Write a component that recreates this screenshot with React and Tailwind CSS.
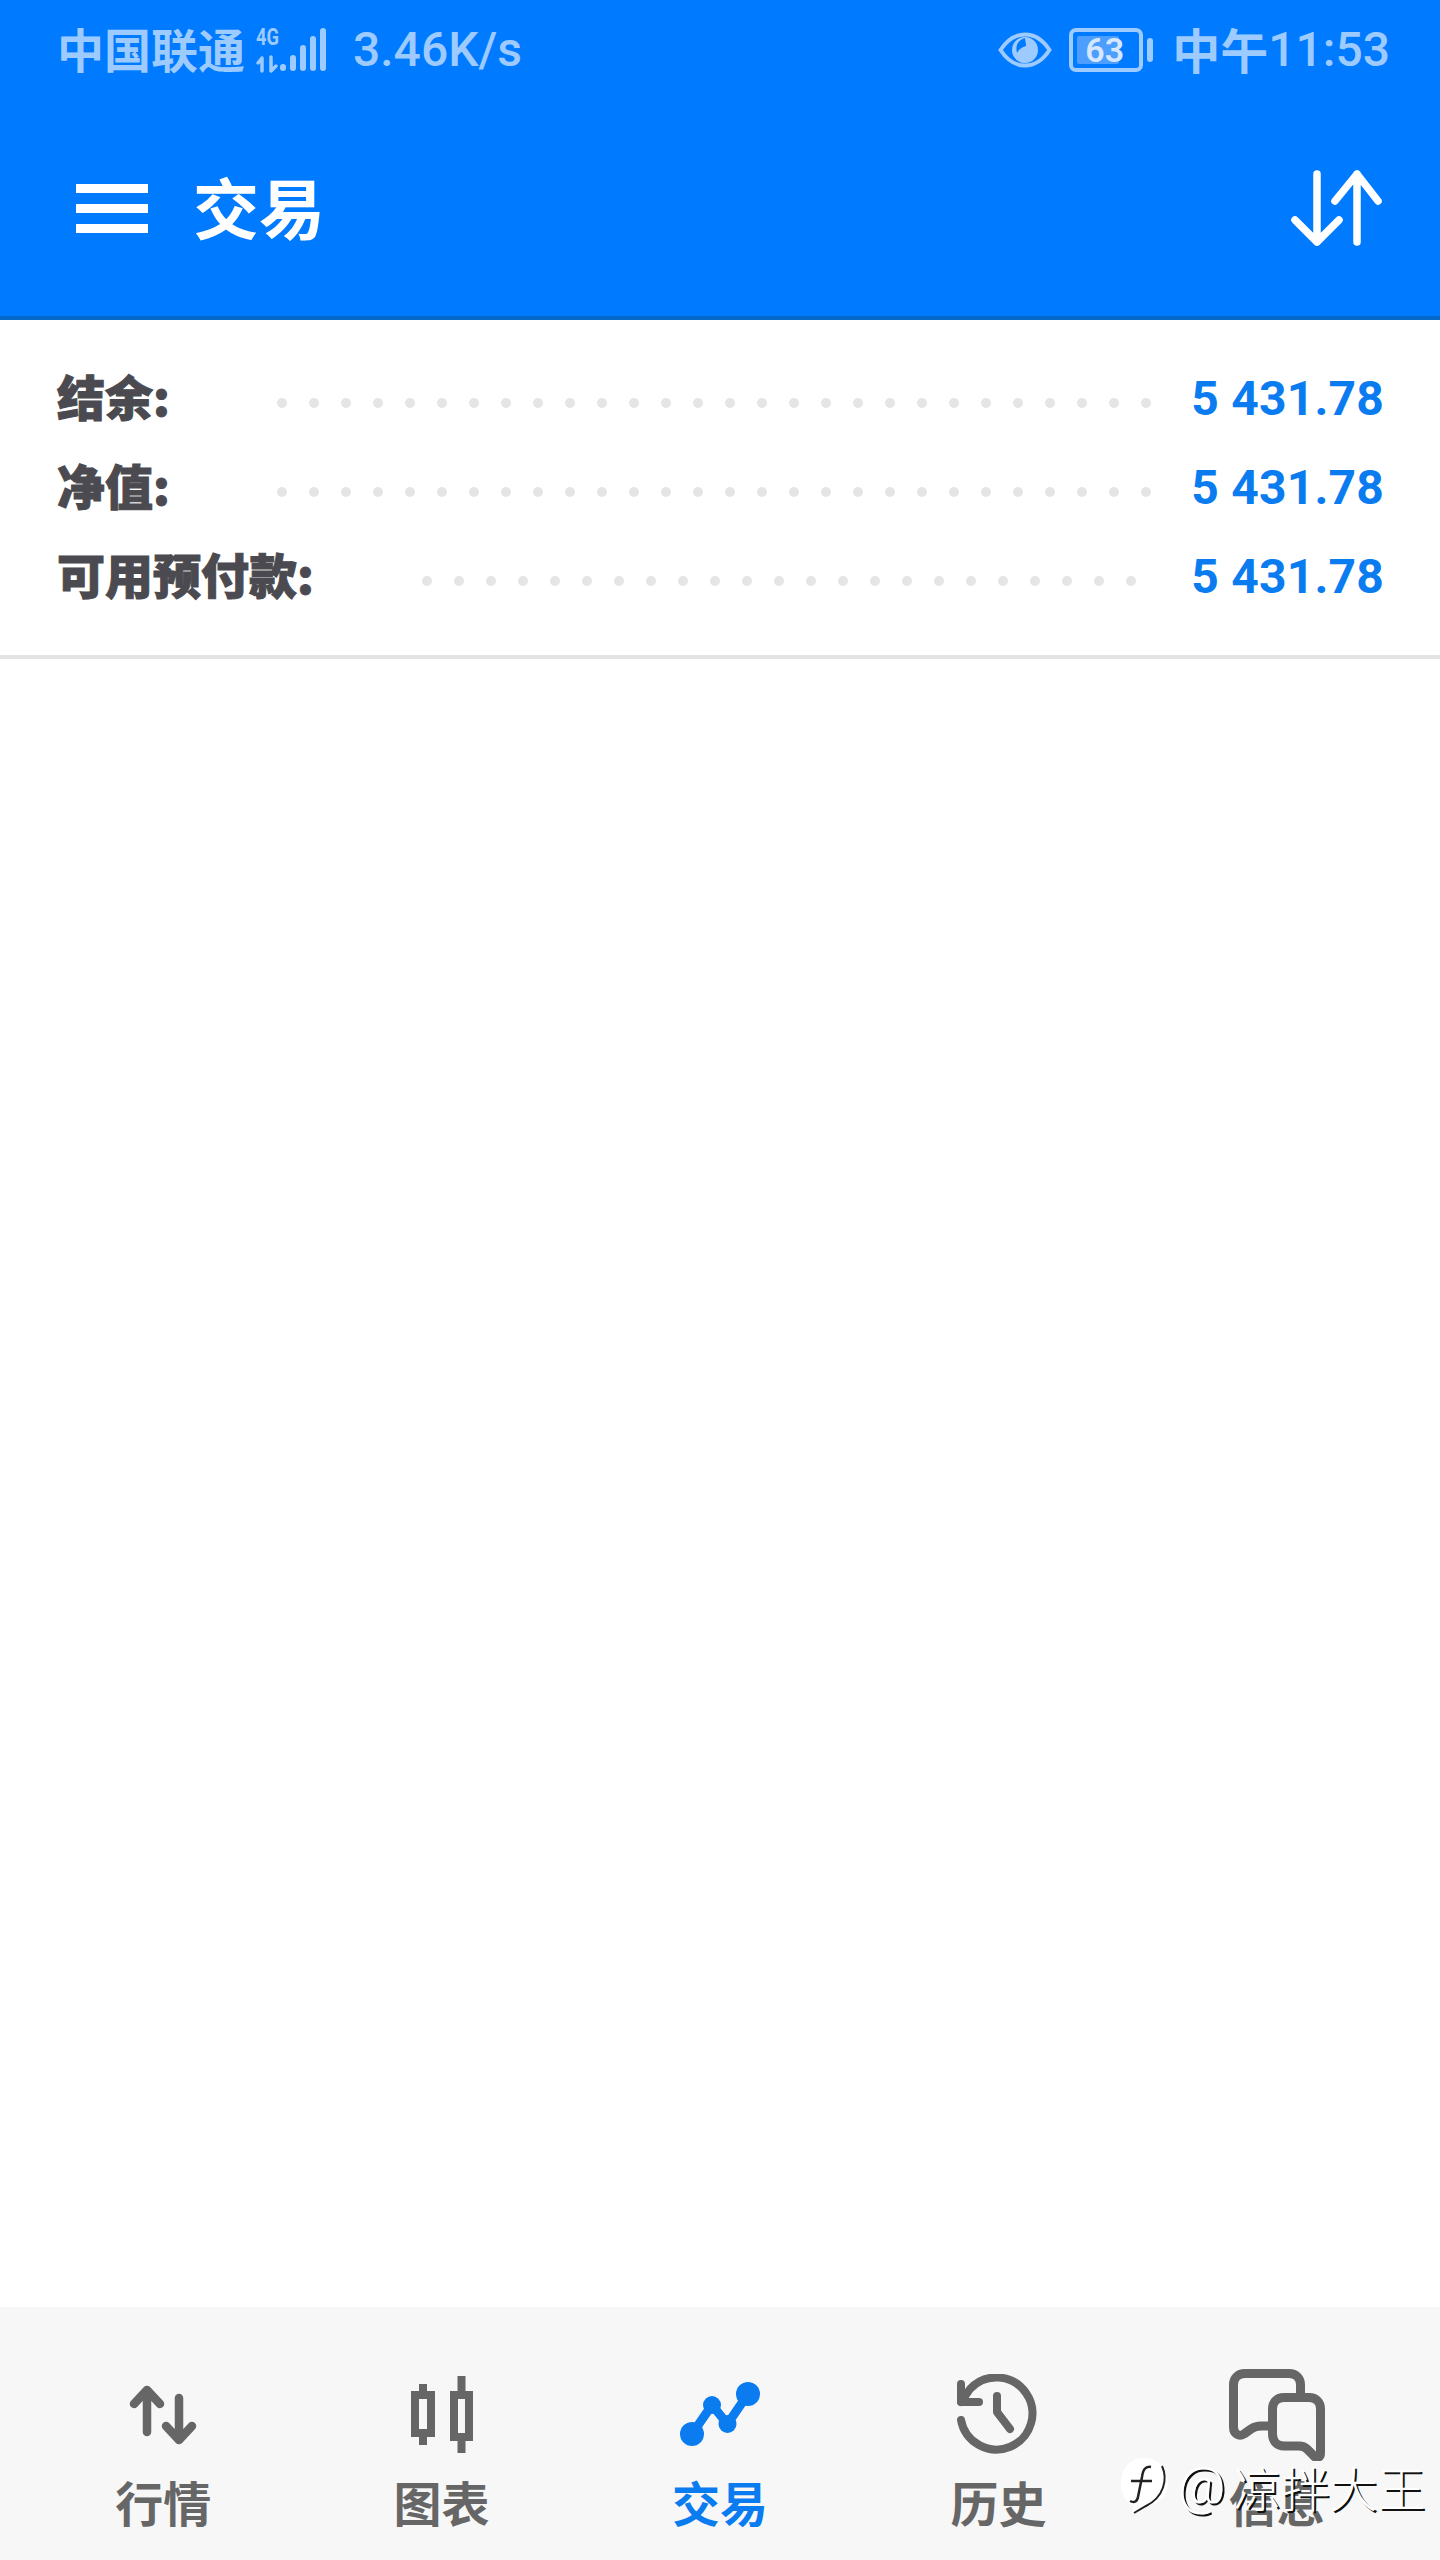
import React from 'react';

const cjk = '"Noto Sans CJK SC", sans-serif';

function SignalIcon() {
  return (
    <svg width="70" height="44" viewBox="0 0 70 44" fill="none" className="overflow-visible text-[#9ecbff]">
      <text x="0" y="17" fontSize="23" fontWeight="700" fill="currentColor" fontFamily="Roboto" textLength="23" lengthAdjust="spacingAndGlyphs">4G</text>
      <path d="M6 43V30M2 35L6 30" stroke="currentColor" strokeWidth="3.5" strokeLinecap="round" strokeLinejoin="round" />
      <path d="M15 29V43L20 38" stroke="currentColor" strokeWidth="3.5" strokeLinecap="round" strokeLinejoin="round" />
      <rect x="24" y="36" width="6" height="7" rx="3" fill="currentColor" />
      <rect x="34" y="27" width="6" height="16" rx="3" fill="currentColor" />
      <rect x="44" y="17" width="6" height="26" rx="3" fill="currentColor" />
      <rect x="54" y="8" width="6" height="35" rx="3" fill="currentColor" />
      <rect x="64" y="0" width="6" height="43" rx="3" fill="currentColor" />
    </svg>
  );
}

function EyeIcon() {
  return (
    <svg width="54" height="36" viewBox="0 0 54 36" fill="none">
      <path d="M2.5 18C9 8 17 2.5 27 2.5S45 8 51.5 18C45 28 37 33.5 27 33.5S9 28 2.5 18Z" stroke="#9ecbff" strokeWidth="4" />
      <circle cx="27" cy="18" r="13" fill="#9ecbff" />
      <path d="M27 6C20 8 17 14 19 21C21 17 24 15 28 14C28 11 27 8 27 6Z" fill="#007aff" />
    </svg>
  );
}

function BatteryIcon() {
  return (
    <div className="flex items-center gap-[4px]">
      <div className="flex h-[44px] w-[74px] items-center rounded-[7px] border-[4px] border-[#9ecbff] p-[4px]">
        <div className="flex h-full w-[42px] items-center rounded-[2px] bg-[#4d9eff] pl-[8px]">
          <span className="whitespace-nowrap text-[34px] font-semibold leading-none text-[#d6e8ff]" style={{ fontFamily: 'Roboto' }}>63</span>
        </div>
      </div>
      <div className="h-[24px] w-[6px] rounded-full bg-[#9ecbff]" />
    </div>
  );
}

function SortIcon() {
  return (
    <svg width="92" height="76" viewBox="0 0 92 76" fill="none" stroke="white" strokeWidth="7.5" strokeLinecap="round" strokeLinejoin="round">
      <path d="M27 4V72M5 50L27 72L49 50" />
      <path d="M67 72V4M45 31L67 4L88 31" />
    </svg>
  );
}

function MarketIcon() {
  return (
    <svg width="68" height="60" viewBox="0 0 68 60" fill="none" stroke="#666666" strokeWidth="8.5" strokeLinecap="round" strokeLinejoin="round">
      <path d="M18 5V47M5 19L18 5L31 19" />
      <path d="M50 13V55M37 41L50 55L63 41" />
    </svg>
  );
}

function ChartIcon() {
  return (
    <svg width="64" height="78" viewBox="0 0 64 78" fill="none">
      <path d="M13 8V69M51.5 0V77" stroke="#666666" strokeWidth="8" />
      <rect x="5" y="19" width="16" height="38" fill="#f7f7f7" stroke="#666666" strokeWidth="8" />
      <rect x="44" y="19" width="15" height="42" fill="#f7f7f7" stroke="#666666" strokeWidth="8" />
    </svg>
  );
}

function TradeIcon() {
  return (
    <svg width="80" height="66" viewBox="0 0 80 66" fill="none">
      <path d="M12 52L32 23L47.5 42L68 12" stroke="#0a7cf0" strokeWidth="9" />
      <circle cx="12" cy="52" r="12" fill="#0a7cf0" />
      <circle cx="32" cy="23" r="9" fill="#0a7cf0" />
      <circle cx="47.5" cy="42" r="9" fill="#0a7cf0" />
      <circle cx="68" cy="12" r="12" fill="#0a7cf0" />
    </svg>
  );
}

function HistoryIcon() {
  return (
    <svg width="82" height="82" viewBox="0 0 82 82" fill="none" stroke="#666666" strokeWidth="8" strokeLinecap="round" strokeLinejoin="round">
      <path d="M4 46A36 36 0 1 0 13 15L4 28" />
      <path d="M4 10V28H22" />
      <path d="M40 22V38L53 55" />
    </svg>
  );
}

function MessageIcon() {
  return (
    <svg width="96" height="92" viewBox="0 0 96 92" fill="none" stroke="#666666" strokeWidth="9" strokeLinejoin="round">
      <path d="M71.5 26V16C71.5 9 67 4.5 60 4.5H16C9 4.5 4.5 9 4.5 16V58C4.5 65 10 68 15 65L22 60C25 58 28 57 32 57H44" />
      <path d="M55 28.5H80C87 28.5 91.5 33 91.5 40V84C91.5 89 87 90 84 86L78 80C76 78 73 77 70 77H55C48 77 43.5 72 43.5 65V40C43.5 33 48 28.5 55 28.5Z" />
    </svg>
  );
}

function ZhihuBadge() {
  return (
    <svg width="50" height="58" viewBox="0 0 50 58" fill="none">
      <path d="M24 1C38 1 48 12 48 26C48 41 36 50 20 50L12 57L13 49C5 45 1 36 1 26C1 12 10 1 24 1Z" fill="white" />
      <path d="M31 10C25 9 23 13 22 20L18 40C17 45 14 46 10 44M11 24H32" stroke="#222222" strokeWidth="2.5" />
      <path d="M42 9C48 22 44 40 26 49L14 56" stroke="#222222" strokeWidth="2" />
    </svg>
  );
}

function Dots({ count }) {
  return (
    <div className="flex gap-[22px]">
      {Array.from({ length: count }).map((_, i) => (
        <span key={i} className="h-[10px] w-[10px] rounded-full bg-[#e5e5e5]" />
      ))}
    </div>
  );
}

function SummaryRow({ label, dots, dotsLeft }) {
  return (
    <div className="flex h-[89px] items-center pl-[57px] pr-[56px]">
      <div className="shrink-0 pb-[8px] text-[48px] font-black leading-none text-[#4a4a50] [-webkit-text-stroke:1px_#4a4a50]" style={{ width: dotsLeft - 57, fontFamily: cjk }}>
        {label}
      </div>
      <div className="mt-[8px]">
        <Dots count={dots} />
      </div>
      <div className="ml-auto text-[48px] font-bold leading-none tracking-[0.2px] text-[#0a7cf0]" style={{ fontFamily: 'Roboto' }}>
        5 431.78
      </div>
    </div>
  );
}

function Tab({ icon, label, active }) {
  return (
    <div className="flex flex-col items-center">
      <div className="flex h-[92px] items-center justify-center">{icon}</div>
      <div className={`mt-[16px] text-[48px] leading-[48px] ${active ? 'font-bold text-[#0a7cf0]' : 'font-semibold text-[#666666]'}`} style={{ fontFamily: cjk }}>
        {label}
      </div>
    </div>
  );
}

export default function App() {
  return (
    <div className="relative flex h-[2560px] w-[1440px] flex-col overflow-hidden bg-white">
      {/* Header */}
      <div className="h-[320px] shrink-0 border-b-[4px] border-[#0668c8] bg-[#007aff]">
        <div className="flex h-[100px] items-center justify-between pl-[57px] pr-[50px] text-[#9ecbff]">
          <div className="flex items-center">
            <span className="pb-[6px] text-[47px] font-semibold leading-none" style={{ fontFamily: cjk }}>中国联通</span>
            <span className="ml-[11px]"><SignalIcon /></span>
            <span className="ml-[27px] text-[48px] font-medium leading-none" style={{ fontFamily: 'Roboto' }}>3.46K/s</span>
          </div>
          <div className="flex items-center">
            <EyeIcon />
            <span className="ml-[17px]"><BatteryIcon /></span>
            <span className="ml-[19px] pb-[4px] text-[48px] font-semibold leading-none" style={{ fontFamily: cjk }}>中午</span>
            <span className="text-[48px] font-medium leading-none" style={{ fontFamily: 'Roboto' }}>11:53</span>
          </div>
        </div>
        <div className="flex h-[216px] items-center justify-between pl-[76px] pr-[58px]">
          <div className="flex items-center">
            <div className="flex w-[72px] flex-col gap-[11px]">
              <div className="h-[9px] bg-white" />
              <div className="h-[9px] bg-white" />
              <div className="h-[9px] bg-white" />
            </div>
            <h1 className="ml-[45px] pb-[6px] text-[66px] font-bold leading-none text-white" style={{ fontFamily: cjk }}>交易</h1>
          </div>
          <SortIcon />
        </div>
      </div>

      {/* Account summary */}
      <div className="shrink-0 border-b-[4px] border-[#e3e3e3] pb-[34px] pt-[34px]">
        <SummaryRow label="结余:" dots={28} dotsLeft={277} />
        <SummaryRow label="净值:" dots={28} dotsLeft={277} />
        <SummaryRow label="可用预付款:" dots={23} dotsLeft={422} />
      </div>

      <div className="flex-1" />

      {/* Bottom tabs */}
      <nav className="grid h-[253px] shrink-0 grid-cols-5 bg-[#f7f7f7] px-[24px] pt-[62px]">
        <Tab icon={<MarketIcon />} label="行情" />
        <Tab icon={<ChartIcon />} label="图表" />
        <Tab icon={<TradeIcon />} label="交易" active />
        <Tab icon={<HistoryIcon />} label="历史" />
        <Tab icon={<MessageIcon />} label="信息" />
      </nav>

      {/* Watermark */}
      <div className="absolute left-[1120px] top-[2457px] flex items-center text-[48px] font-light leading-none text-white [text-shadow:2px_2px_0_#111111]" style={{ fontFamily: cjk }}>
        <ZhihuBadge />
        <span className="ml-[8px] text-[52px]" style={{ fontFamily: 'Roboto' }}>@</span>
        <span className="ml-[8px]">凉拌大王</span>
      </div>
    </div>
  );
}
